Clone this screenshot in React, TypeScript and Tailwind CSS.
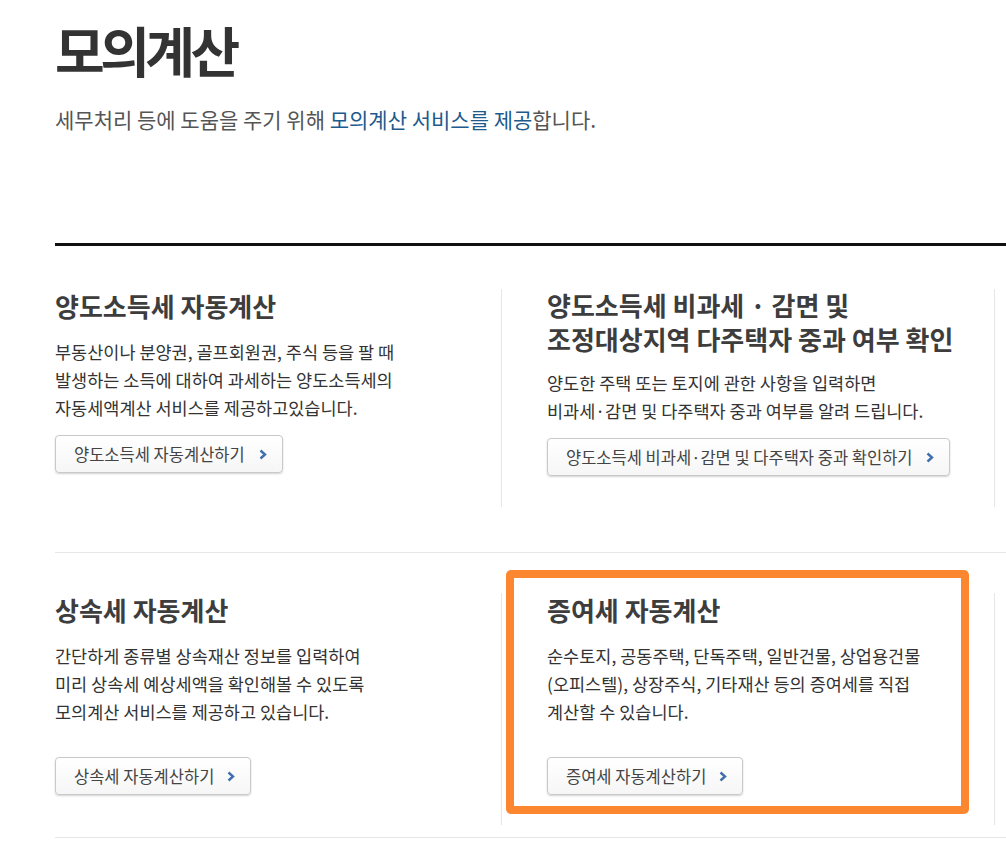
import React from 'react';

const font = { fontFamily: '"Noto Sans CJK KR", "Noto Sans", sans-serif' };

function Chevron() {
  return (
    <svg width="8" height="11" viewBox="0 0 8 11" className="shrink-0">
      <polyline points="1.5,1.5 6,5.5 1.5,9.5" fill="none" stroke="#3f6fae" strokeWidth="2.4" />
    </svg>
  );
}

function CalcButton({ label, className = '' }: { label: string; className?: string }) {
  return (
    <button
      type="button"
      className={`inline-flex h-[38px] items-center gap-[13px] rounded-[4px] border border-[#c9c9c9] bg-gradient-to-b from-white to-[#f6f6f6] pl-[18px] pr-[15px] text-[16.5px] text-[#444] shadow-[0_1px_2px_rgba(0,0,0,0.18)] ${className}`}
    >
      <span>{label}</span>
      <Chevron />
    </button>
  );
}

export default function App() {
  return (
    <div className="min-h-[845px] overflow-hidden bg-white pl-[55px]" style={font}>
      <h1 className="pt-[20px] text-[54px] font-bold leading-[60px] tracking-[-4.5px] text-[#333]">모의계산</h1>
      <p className="mt-[25px] text-[21px] leading-[28px] text-[#555]">
        세무처리 등에 도움을 주기 위해 <span className="text-[#1d5a8e]">모의계산 서비스를 제공</span>합니다.
      </p>

      <div className="mt-[110px] border-t-[3px] border-[#111]">
        {/* row 1 */}
        <div className="grid grid-cols-[446px_494px] pt-[43px] pb-[45px]">
          <section className="pb-[31px]">
            <h2 className="text-[26px] font-bold leading-[33px] text-[#3d3d3d]">양도소득세 자동계산</h2>
            <p className="mt-[16px] text-[17.5px] leading-[28px] text-[#333]">
              부동산이나 분양권, 골프회원권, 주식 등을 팔 때<br />
              발생하는 소득에 대하여 과세하는 양도소득세의<br />
              자동세액계산 서비스를 제공하고있습니다.
            </p>
            <CalcButton label="양도소득세 자동계산하기" className="mt-[13px] w-[228px] justify-between" />
          </section>
          <section className="border-x border-[#e6e6e6] pb-[31px] pl-[45px]">
            <h2 className="-mt-[1px] text-[26px] font-bold leading-[34px] text-[#3d3d3d]">
              양도소득세 비과세 · 감면 및<br />
              조정대상지역 다주택자 중과 여부 확인
            </h2>
            <p className="mt-[13px] text-[17.5px] leading-[28px] text-[#333]">
              양도한 주택 또는 토지에 관한 사항을 입력하면<br />
              비과세·감면 및 다주택자 중과 여부를 알려 드립니다.
            </p>
            <CalcButton label="양도소득세 비과세·감면 및 다주택자 중과 확인하기" className="mt-[13px]" />
          </section>
        </div>

        {/* row 2 */}
        <div className="grid grid-cols-[446px_494px] border-y border-[#e6e6e6] pt-[40px] pb-[12px]">
          <section className="pb-[30px]">
            <h2 className="text-[26px] font-bold leading-[33px] text-[#3d3d3d]">상속세 자동계산</h2>
            <p className="mt-[16px] text-[17.5px] leading-[28px] text-[#333]">
              간단하게 종류별 상속재산 정보를 입력하여<br />
              미리 상속세 예상세액을 확인해볼 수 있도록<br />
              모의계산 서비스를 제공하고 있습니다.
            </p>
            <CalcButton label="상속세 자동계산하기" className="mt-[31px]" />
          </section>
          <section className="relative border-x border-[#e6e6e6] pb-[30px] pl-[45px]">
            <h2 className="text-[26px] font-bold leading-[33px] text-[#3d3d3d]">증여세 자동계산</h2>
            <p className="mt-[16px] text-[17.5px] leading-[28px] text-[#333]">
              순수토지, 공동주택, 단독주택, 일반건물, 상업용건물<br />
              (오피스텔), 상장주식, 기타재산 등의 증여세를 직접<br />
              계산할 수 있습니다.
            </p>
            <CalcButton label="증여세 자동계산하기" className="mt-[31px]" />
            <div className="pointer-events-none absolute top-[-23px] right-[25px] bottom-[11px] left-[4px] rounded-[5px] border-[8px] border-[#fd8731]" />
          </section>
        </div>
      </div>
    </div>
  );
}
